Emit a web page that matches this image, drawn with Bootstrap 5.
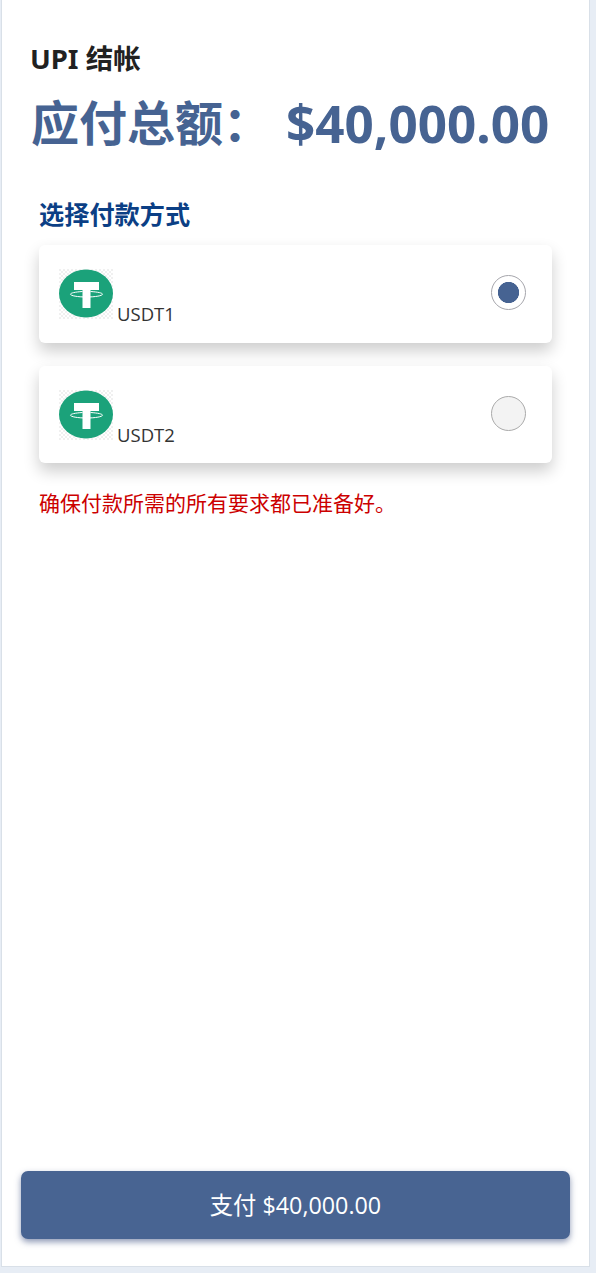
<!doctype html>
<html lang="zh">
<head>
<meta charset="utf-8">
<title>UPI 结帐</title>
<link href="https://cdn.jsdelivr.net/npm/bootstrap@5.3.0/dist/css/bootstrap.min.css" rel="stylesheet">
<style>
html,body{height:100%;}
body{background:#e7edf5;font-family:"Open Sans","Noto Sans CJK SC",sans-serif;overflow:hidden;}
.sheet{width:589px;height:1267px;margin-left:1px;background:#fff;border:1px solid #d9e0e8;border-top:0;padding:0 18px 27px 19px;}
.pay-title{font-family:"Noto Sans","Noto Sans CJK SC",sans-serif;font-size:27.5px;font-weight:700;color:#212121;line-height:36px;margin:41px 0 0 9px;}
.pay-total{font-family:"Noto Sans","Noto Sans CJK SC",sans-serif;font-size:48px;font-weight:700;color:#466392;line-height:66px;margin:13px 0 0 10px;white-space:nowrap;display:flex;align-items:center;gap:15px;}
.pay-amount{font-size:51.2px;line-height:66px;}
.pay-sub{font-family:"Noto Sans","Noto Sans CJK SC",sans-serif;font-size:25.2px;font-weight:700;color:#0b3f85;line-height:34px;margin:41px 0 14px 18px;}
.coin-card{margin:0 19px 23px 18px;height:97.5px;padding:24px 26px 0 20px;border:0;border-radius:6px;box-shadow:0 8px 16px rgba(0,0,0,.2);}
.coin-name{font-size:18.5px;line-height:24px;color:#333;margin-left:4px;padding-top:33px;}
.coin-radio{width:35px;height:35px;margin:6px 0 0;border:1.5px solid #aaa;background-color:#f3f3f3;}
.coin-radio:checked{background-color:#fff;border-color:#a6a6ac;background-image:radial-gradient(circle,#466392 0,#466392 10.300px,transparent 10.900px);}
.coin-radio:focus{box-shadow:none;border-color:#aaa;}
.pay-note{font-size:21px;color:#cc0000;line-height:30px;margin:1px 0 0 18px;font-family:"Noto Sans CJK SC",sans-serif;}
.pay-btn{height:68px;font-size:23.3px;color:#fff;background:#486492;border:0;border-radius:7px;box-shadow:0 3px 6px rgba(50,70,120,.55);margin-right:1px;font-family:"Open Sans","Noto Sans CJK SC",sans-serif;}
.pay-btn:hover{background:#486492;color:#fff;}
</style>
</head>
<body>
<main class="sheet d-flex flex-column">
  <h1 class="pay-title">UPI 结帐</h1>
  <div class="pay-total"><span>应付总额：</span><span class="pay-amount">$40,000.00</span></div>
  <h2 class="pay-sub">选择付款方式</h2>
  <label class="card coin-card d-flex flex-row justify-content-between align-items-start">
    <span class="d-flex">
      <svg width="54" height="50" viewBox="0 0 54 50" aria-hidden="true">
        <defs><pattern id="chk" width="4" height="4" patternUnits="userSpaceOnUse"><rect width="4" height="4" fill="#fff"/><rect width="2" height="2" fill="#f0f0f0"/><rect x="2" y="2" width="2" height="2" fill="#f0f0f0"/></pattern>
        <g id="teth"><ellipse cx="27" cy="24.500" rx="27" ry="24" fill="#1ba27a"/><path fill="#fff" d="M15 13h25v8h-8.500v18h-8V21H15z"/><path fill="none" stroke="#fff" stroke-width="1" d="M23.500 22.500C16 23 11.500 24 11.500 25.200c0 1.500 7 2.800 16 2.800s16-1.300 16-2.800c0-1.200-4.500-2.200-12-2.700"/></g></defs>
        <rect width="54" height="50" fill="url(#chk)"/><use href="#teth"/>
      </svg>
      <span class="coin-name">USDT1</span>
    </span>
    <input class="form-check-input coin-radio" type="radio" name="coin" checked>
  </label>
  <label class="card coin-card d-flex flex-row justify-content-between align-items-start">
    <span class="d-flex">
      <svg width="54" height="50" viewBox="0 0 54 50" aria-hidden="true"><rect width="54" height="50" fill="url(#chk)"/><use href="#teth"/></svg>
      <span class="coin-name">USDT2</span>
    </span>
    <input class="form-check-input coin-radio" type="radio" name="coin">
  </label>
  <p class="pay-note">确保付款所需的所有要求都已准备好。</p>
  <button type="button" class="btn pay-btn mt-auto">支付 $40,000.00</button>
</main>
<script src="https://cdn.jsdelivr.net/npm/bootstrap@5.3.0/dist/js/bootstrap.bundle.min.js"></script>
</body>
</html>
